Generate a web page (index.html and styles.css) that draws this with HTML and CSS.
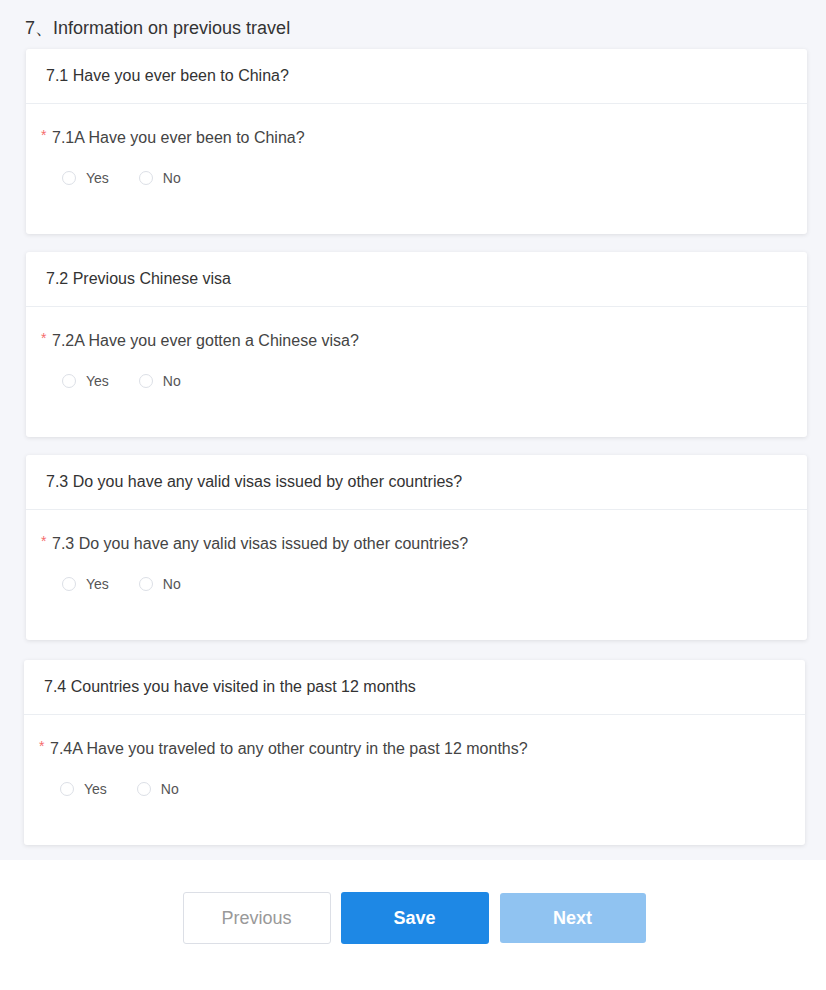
FILE: index.html
```html
<!DOCTYPE html>
<html>
<head>
<meta charset="utf-8">
<link rel="stylesheet" href="styles.css">
</head>
<body>
<main class="main">
  <h2 class="section-title">7、Information on previous travel</h2>

  <section class="card">
    <div class="card-header">7.1 Have you ever been to China?</div>
    <div class="card-body">
      <div class="question"><span class="req">*</span>7.1A Have you ever been to China?</div>
      <div class="radios">
        <label class="radio"><span class="circle"></span>Yes</label>
        <label class="radio"><span class="circle"></span>No</label>
      </div>
    </div>
  </section>

  <section class="card">
    <div class="card-header">7.2 Previous Chinese visa</div>
    <div class="card-body">
      <div class="question"><span class="req">*</span>7.2A Have you ever gotten a Chinese visa?</div>
      <div class="radios">
        <label class="radio"><span class="circle"></span>Yes</label>
        <label class="radio"><span class="circle"></span>No</label>
      </div>
    </div>
  </section>

  <section class="card">
    <div class="card-header">7.3 Do you have any valid visas issued by other countries?</div>
    <div class="card-body">
      <div class="question"><span class="req">*</span>7.3 Do you have any valid visas issued by other countries?</div>
      <div class="radios">
        <label class="radio"><span class="circle"></span>Yes</label>
        <label class="radio"><span class="circle"></span>No</label>
      </div>
    </div>
  </section>

  <section class="card card-shifted">
    <div class="card-header">7.4 Countries you have visited in the past 12 months</div>
    <div class="card-body">
      <div class="question"><span class="req">*</span>7.4A Have you traveled to any other country in the past 12 months?</div>
      <div class="radios">
        <label class="radio"><span class="circle"></span>Yes</label>
        <label class="radio"><span class="circle"></span>No</label>
      </div>
    </div>
  </section>
</main>
<footer class="footer">
  <button class="btn btn-prev">Previous</button>
  <button class="btn btn-save">Save</button>
  <button class="btn btn-next">Next</button>
</footer>
</body>
</html>
```
FILE: styles.css
```css
* { box-sizing: border-box; }
html, body { margin: 0; padding: 0; }
body {
  font-family: "Liberation Sans", Arial, sans-serif;
  background: #ffffff;
  color: #333;
}
.main {
  background: #f5f6fa;
  padding: 14px 19px 15px 26px;
}
.section-title {
  margin: 0 0 7px -1px;
  font-size: 18px;
  font-weight: normal;
  line-height: 28px;
  color: #333;
}
.card {
  background: #fff;
  border-radius: 3px;
  box-shadow: 0 1px 4px rgba(0, 0, 0, 0.1);
  margin-bottom: 18px;
}
.card:last-child { margin-bottom: 0; }
.card-shifted {
  margin-left: -2px;
  margin-right: 2px;
  margin-top: 20px;
}
.card-header {
  height: 55px;
  line-height: 54px;
  padding-left: 20px;
  font-size: 16px;
  color: #333;
  border-bottom: 1px solid #ebeef2;
}
.card-body {
  height: 130px;
  padding: 23px 0 0 15px;
}
.question {
  font-size: 16px;
  line-height: 22px;
  height: 22px;
  color: #444;
  display: flex;
  align-items: flex-start;
}
.req {
  color: #f56c6c;
  font-size: 14px;
  line-height: 16px;
  width: 11px;
  flex: none;
}
.radios {
  display: flex;
  margin-top: 19px;
  padding-left: 21px;
  gap: 30px;
  height: 20px;
}
.radio {
  display: flex;
  align-items: center;
  gap: 10px;
  font-size: 14px;
  line-height: 20px;
  height: 20px;
  color: #555;
}
.circle {
  width: 14px;
  height: 14px;
  border: 1px solid #dcdfe6;
  border-radius: 50%;
  background: #fff;
}
.footer {
  background: #fff;
  display: flex;
  justify-content: center;
  gap: 10px;
  padding: 32px 0 47px 2px;
}
.btn {
  width: 148px;
  height: 52px;
  border-radius: 3px;
  font-family: "Liberation Sans", Arial, sans-serif;
  font-size: 18px;
  border: 1px solid transparent;
  cursor: pointer;
}
.btn-prev {
  background: #fff;
  border-color: #dcdfe6;
  color: #999;
}
.btn-save {
  background: #1e88e5;
  color: #fff;
  font-weight: bold;
}
.btn-next {
  background: #90c3f1;
  color: #fff;
  font-weight: bold;
  width: 146px;
  height: 50px;
  margin: 1px 0 0 1px;
}
```
